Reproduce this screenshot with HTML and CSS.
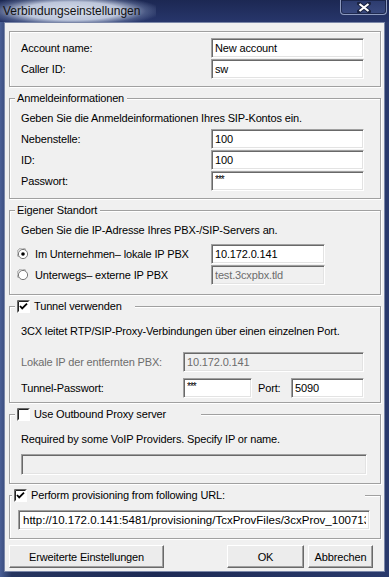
FILE: index.html
```html
<!DOCTYPE html>
<html lang="de">
<head>
  <meta charset="UTF-8" />
  <title>Verbindungseinstellungen</title>
  <link rel="stylesheet" href="styles.css">
</head>
<body>
  <div class="window">
    <div class="titlebar">
      <span class="title">Verbindungseinstellungen</span>
      <div class="close">
        <svg width="14" height="11" viewBox="0 0 14 11">
          <path d="M2 1.5 L12 9.5 M12 1.5 L2 9.5" stroke="#1b2342" stroke-width="4" stroke-linecap="square"/>
          <path d="M2.5 2 L11.5 9 M11.5 2 L2.5 9" stroke="#fff" stroke-width="2.2"/>
        </svg>
      </div>
    </div>

    <div class="client">
      <div class="box">
        <div class="row"><span class="label">Account name:</span><input class="edit" value="New account"></div>
        <div class="row"><span class="label">Caller ID:</span><input class="edit" value="sw"></div>
      </div>

      <fieldset class="group group-login">
        <legend>Anmeldeinformationen</legend>
        <p class="hint">Geben Sie die Anmeldeinformationen Ihres SIP-Kontos ein.</p>
        <div class="rows">
          <div class="row"><span class="label">Nebenstelle:</span><input class="edit" value="100"></div>
          <div class="row"><span class="label">ID:</span><input class="edit" value="100"></div>
          <div class="row"><span class="label">Passwort:</span><input class="edit pw" value="***"></div>
        </div>
      </fieldset>

      <fieldset class="group group-place">
        <legend>Eigener Standort</legend>
        <p class="hint">Geben Sie die IP-Adresse Ihres PBX-/SIP-Servers an.</p>
        <div class="rows">
          <div class="row">
            <span class="label radio-label">
              <svg class="radio" width="12" height="12" viewBox="0 0 12 12">
                <path d="M1.5 9 A5 5 0 0 1 9 1.5" fill="none" stroke="#a0a0a0"/>
                <circle cx="6" cy="6" r="4.6" fill="#fff" stroke="#696969" stroke-width="0.9"/>
                <circle cx="6" cy="6" r="1.8" fill="#000"/>
              </svg>Im Unternehmen– lokale IP PBX</span>
            <input class="edit edit-short" value="10.172.0.141">
          </div>
          <div class="row">
            <span class="label radio-label">
              <svg class="radio" width="12" height="12" viewBox="0 0 12 12">
                <path d="M1.5 9 A5 5 0 0 1 9 1.5" fill="none" stroke="#a0a0a0"/>
                <circle cx="6" cy="6" r="4.6" fill="#fff" stroke="#696969" stroke-width="0.9"/>
              </svg>Unterwegs– externe IP PBX</span>
            <input class="edit edit-short" value="test.3cxpbx.tld" disabled>
          </div>
        </div>
      </fieldset>

      <fieldset class="group group-tunnel">
        <legend class="legend-check legend-tunnel">
          <svg class="check" width="13" height="13" viewBox="0 0 13 13">
            <rect x="0" y="0" width="13" height="13" fill="#fff"/>
            <path d="M0.5 12.5 V0.5 H12.5" fill="none" stroke="#696969"/>
            <path d="M1.5 11.5 V1.5 H11.5" fill="none" stroke="#222"/>
            <path d="M3 6 L5.2 8.4 L10 3.6" fill="none" stroke="#000" stroke-width="1.8"/>
          </svg>Tunnel verwenden</legend>
        <p class="hint">3CX leitet RTP/SIP-Proxy-Verbindungen über einen einzelnen Port.</p>
        <div class="rows rows-tunnel">
          <div class="row"><span class="label muted">Lokale IP der entfernten PBX:</span><input class="edit edit-wide" value="10.172.0.141" disabled></div>
          <div class="row">
            <span class="label">Tunnel-Passwort:</span>
            <input class="edit edit-pass pw" value="***">
            <span class="port-label">Port:</span>
            <input class="edit edit-port" value="5090">
          </div>
        </div>
      </fieldset>

      <fieldset class="group group-proxy">
        <legend class="legend-check legend-proxy">
          <svg class="check" width="13" height="13" viewBox="0 0 13 13">
            <rect x="0" y="0" width="13" height="13" fill="#fff"/>
            <path d="M0.5 12.5 V0.5 H12.5" fill="none" stroke="#696969"/>
            <path d="M1.5 11.5 V1.5 H11.5" fill="none" stroke="#222"/>
          </svg>Use Outbound Proxy server</legend>
        <p class="hint">Required by some VoIP Providers. Specify IP or name.</p>
        <input class="edit edit-proxy" value="" disabled>
      </fieldset>

      <fieldset class="group group-prov">
        <legend class="legend-check legend-prov">
          <svg class="check" width="13" height="13" viewBox="0 0 13 13">
            <rect x="0" y="0" width="13" height="13" fill="#fff"/>
            <path d="M0.5 12.5 V0.5 H12.5" fill="none" stroke="#696969"/>
            <path d="M1.5 11.5 V1.5 H11.5" fill="none" stroke="#222"/>
            <path d="M3 6 L5.2 8.4 L10 3.6" fill="none" stroke="#000" stroke-width="1.8"/>
          </svg>Perform provisioning from following URL:</legend>
        <input class="edit edit-url" value="http://10.172.0.141:5481/provisioning/TcxProvFiles/3cxProv_1007131944.xml">
      </fieldset>

      <div class="buttons">
        <button class="btn btn-advanced">Erweiterte Einstellungen</button>
        <button class="btn btn-ok">OK</button>
        <button class="btn btn-cancel">Abbrechen</button>
      </div>
    </div>
  </div>
</body>
</html>
```

FILE: styles.css
```css
body {
  margin: 0;
  font-family: 'Liberation Sans', Arial, sans-serif;
  font-size: 11px;
  letter-spacing: -0.15px;
  color: #000;
}
.window {
  width: 389px;
  height: 577px;
  display: flex;
  flex-direction: column;
  background: linear-gradient(90deg, #4a5f96 0%, #26355f 3%, #1d2a55 40%, #2a3a6c 100%);
}
.titlebar {
  height: 22px;
  display: flex;
  justify-content: space-between;
  align-items: flex-start;
  background: linear-gradient(180deg, #1c2853 0%, #27366b 100%);
}
.title {
  font-size: 12px;
  letter-spacing: 0;
  line-height: 22px;
  height: 22px;
  padding: 0 16px 0 3px;
  color: #111;
  background: radial-gradient(ellipse 58% 75% at 46% 50%, rgba(222,228,240,0.97) 0%, rgba(205,214,232,0.9) 55%, rgba(120,136,175,0.45) 82%, rgba(40,56,100,0) 100%);
}
.close {
  width: 45px;
  height: 14px;
  margin-right: 2px;
  border: 1px solid #8e9bbf;
  border-top: none;
  border-radius: 0 0 4px 4px;
  background: linear-gradient(180deg, #2c3b6e 0%, #3a4a80 100%);
  box-shadow: inset 0 0 0 1px rgba(20,28,60,0.7);
  display: flex;
  align-items: center;
  justify-content: center;
}
.client {
  flex: 1;
  margin: 0 4px 5px 4px;
  padding: 8px 3px 0 4px;
  background: #f0f0f0;
  border: 1px solid #7b87a8;
}
.box {
  border: 1px solid #a0a0a0;
  box-shadow: inset 1px 1px 0 #fff, 1px 1px 0 #fff;
  padding: 6px 16px 7px 11px;
  display: flex;
  flex-direction: column;
  gap: 1px;
}
.row {
  display: flex;
  align-items: center;
  height: 20px;
}
.label {
  width: 190px;
  flex: none;
}
.rows {
  display: flex;
  flex-direction: column;
  gap: 1px;
}
.group {
  margin: 5px 0 0 0;
  padding: 7px 16px 7px 11px;
  border: 1px solid #a0a0a0;
  box-shadow: inset 1px 1px 0 #fff, 1px 1px 0 #fff;
  min-width: 0;
}
.group legend {
  margin-left: -6px;
  padding: 0 3px 0 2px;
  line-height: 13px;
  background: #f0f0f0;
}
.legend-check {
  display: flex;
  align-items: center;
  margin-left: -4px;
}
.legend-check .check {
  margin-right: 4px;
}
.legend-tunnel { width: 115px; }
.legend-proxy { width: 181px; }
.legend-prov { width: 348px; }
.hint {
  margin: 0 0 4px 0;
  line-height: 13px;
}
.edit {
  width: 154px;
  height: 20px;
  box-sizing: border-box;
  padding: 0 3px;
  margin: 0;
  font: inherit;
  letter-spacing: inherit;
  color: #000;
  background: #fff;
  border: 1px solid;
  border-color: #a0a0a0 #fff #fff #a0a0a0;
  box-shadow: inset 1px 1px 0 #696969, inset -1px -1px 0 #e3e3e3;
  outline: none;
}
.edit:disabled {
  background: #f0f0f0;
  color: #6d6d6d;
}
.pw {
  font-size: 10px;
  letter-spacing: -1px;
  padding-bottom: 4px;
}
.group-place .hint { margin-bottom: 7px; }
.group-place { padding-bottom: 9px; }
.radio-label {
  display: flex;
  align-items: center;
  margin-left: -4px;
  width: 194px;
}
.radio {
  margin-right: 6px;
}
.edit-short { width: 114px; }
.group-tunnel .hint { margin: 5px 0 14px 0; }
.group-tunnel { padding-bottom: 4px; }
.rows-tunnel { gap: 6px; }
.rows-tunnel .label { width: 162px; }
.muted { color: #6d6d6d; }
.edit-wide { width: 182px; }
.edit-pass { width: 69px; }
.port-label {
  width: 40px;
  padding-left: 6px;
  box-sizing: border-box;
}
.edit-port { width: 73px; }
.group-proxy .hint { margin: 5px 0 8px 0; }
.group-proxy { padding-bottom: 8px; }
.edit-proxy {
  width: 346px;
  height: 21px;
}
.group-prov {
  padding: 8px 10px 8px 8px;
}
.edit-url {
  width: 352px;
  padding-left: 4px;
  font-size: 11.5px;
  letter-spacing: 0;
}
.buttons {
  display: flex;
  margin-top: 6px;
  padding-right: 8px;
}
.btn {
  height: 23px;
  font: inherit;
  letter-spacing: inherit;
  color: #000;
  padding: 0;
  background: #ececec;
  border: 1px solid;
  border-color: #fff #696969 #696969 #fff;
  box-shadow: inset -1px -1px 0 #a0a0a0;
}
.btn-advanced { width: 155px; }
.btn-ok {
  width: 77px;
  margin-left: auto;
}
.btn-cancel {
  width: 65px;
  margin-left: 4px;
}
```
